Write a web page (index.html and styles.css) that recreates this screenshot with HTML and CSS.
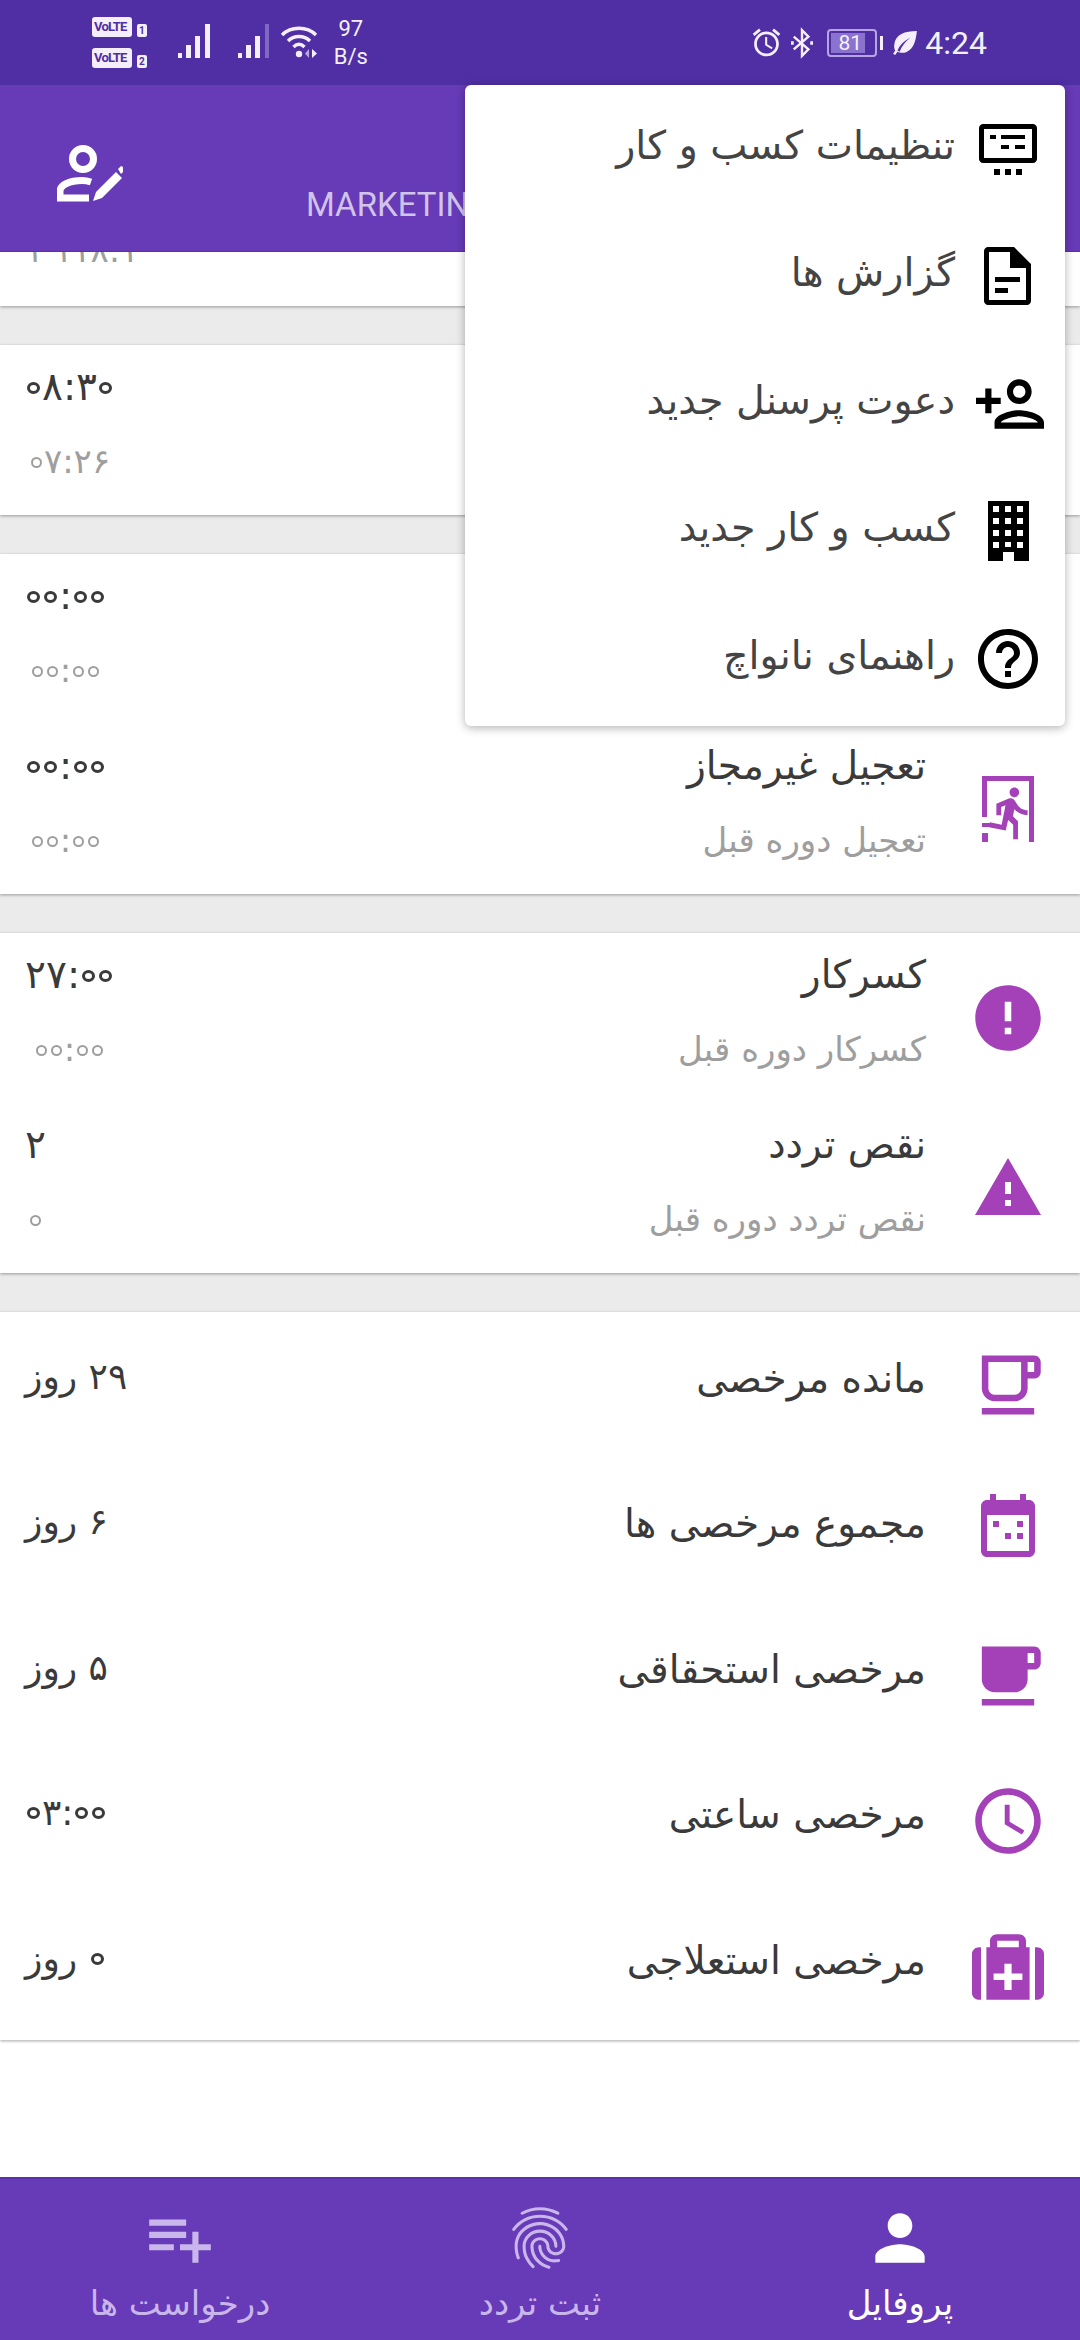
FILE: index.html
```html
<!DOCTYPE html>
<html lang="fa">

<head>
    <meta charset="UTF-8">
    <title>پروفایل</title>
    <link rel="stylesheet" href="styles.css">
</head>

<body>
    <div class="phone">

        <div class="status-bar">
            <div class="status-left">
                <div class="volte-stack">
                    <div class="volte"><span class="volte-tag">VoLTE</span><span class="sim-no">1</span></div>
                    <div class="volte"><span class="volte-tag">VoLTE</span><span class="sim-no">2</span></div>
                </div>
                <svg class="signal" viewBox="0 0 36 36"><path fill="#f5effc" d="M0 31h4v5H0zM8 23h5v13H8zM17 14h5v22h-5zM27 2h5v34h-5z"/></svg>
                <svg class="signal second" viewBox="0 0 36 36"><path fill="#f5effc" d="M0 31h4v5H0zM8 23h5v13H8zM17 14h5v22h-5z"/><path fill="#8068c4" d="M27 2h4v34h-4z"/></svg>
                <svg class="wifi" viewBox="0 0 40 36"><g fill="none" stroke="#f5effc" stroke-width="3.4"><path d="M2 12C11 3 27 3 36 12"/><path d="M8 18c6-6 16-6 22 0"/><path d="M13.500 24c3.500-3.500 7.500-3.500 11 0"/></g><circle cx="19" cy="31" r="3.200" fill="#f5effc"/><path fill="#b9a7e2" d="M29 26v9l-4-4.500z"/><path fill="#f5effc" d="M32 26v9l5-4.500z"/></svg>
                <div class="net-speed">97<br>B/s</div>
            </div>
            <div class="status-right">
                <svg class="alarm" viewBox="0 0 24 24"><path fill="#f5effc" d="M22 5.720l-4.600-3.860-1.290 1.530 4.600 3.860L22 5.720zM7.880 3.390L6.600 1.860 2 5.710l1.290 1.530 4.590-3.850zM12.500 8H11v6l4.750 2.850.75-1.230-4-2.370V8zM12 4c-4.970 0-9 4.030-9 9s4.030 9 9 9 9-4.030 9-9-4.030-9-9-9zm0 16c-3.870 0-7-3.130-7-7s3.130-7 7-7 7 3.130 7 7-3.130 7-7 7z"/></svg>
                <svg class="bluetooth" viewBox="0 0 24 34"><path fill="none" stroke="#f5effc" stroke-width="2.600" d="M3 10l16 14-7 7V3l7 7L3 24"/><path fill="#f5effc" d="M0 15h3v4H0zM21 15h3v4h-3z"/></svg>
                <div class="battery">
                    <div class="battery-body"><span class="battery-level"></span><span class="battery-pct">81</span></div>
                    <span class="battery-cap"></span>
                </div>
                <svg class="leaf" viewBox="0 0 24 24"><path fill="#f5effc" d="M23 1C12 1 3 4 2 14c-.2 2 .3 4 1 5l-2 3 2 1 2-3c2 1 5 1.500 8 .5C20 18 22 10 23 1zM5 19c2-5 6-9 12-12-5 4-8 8-10 13z"/></svg>
                <span class="clock">4:24</span>
            </div>
        </div>

        <div class="app-bar">
            <svg class="edit-user" viewBox="0 0 66 58"><circle cx="26" cy="14" r="10.500" fill="none" stroke="#fff" stroke-width="7"/><path fill="none" stroke="#fff" stroke-width="7" d="M34 37c-3-1-6-1.500-9-1.500C13 35.500 3 40 3 46v7h29"/><path fill="#fff" d="M59 27l6 6-20 20-9 3 3-9zM61 24l3-3 2 1v5l-2 2z"/></svg>
            <span class="company">MARKETING</span>
        </div>

        <div class="report" dir="rtl">
            <div class="card clipped">
                <div class="row">
                    <div class="row-vals">
                        <span class="val"></span>
                        <span class="sub">۱۱۸:۱ ۱</span>
                    </div>
                </div>
            </div>
            <div class="spacer"></div>

            <div class="card">
                <div class="row">
                    <div class="row-text"></div>
                    <div class="row-vals">
                        <span class="val" dir="ltr"><i class="zero">۰</i>۸:۳<i class="zero">۰</i></span>
                        <span class="sub" dir="ltr"><i class="zero">۰</i>۷:۲۶</span>
                    </div>
                </div>
            </div>
            <div class="spacer"></div>

            <div class="card">
                <div class="row">
                    <div class="row-text"></div>
                    <div class="row-vals">
                        <span class="val" dir="ltr"><i class="zero">۰</i><i class="zero">۰</i>:<i class="zero">۰</i><i class="zero">۰</i></span>
                        <span class="sub" dir="ltr"><i class="zero">۰</i><i class="zero">۰</i>:<i class="zero">۰</i><i class="zero">۰</i></span>
                    </div>
                </div>
                <div class="row">
                    <svg class="row-icon" viewBox="-10 -3 72 72"><g fill="#a541b8"><path d="M0 0h52v66h-5V5H5v36H0zM0 47h9v4H0zM0 57h6v9H0z"/><path transform="translate(0 8) scale(2.4)" d="M13.490 5.480c1.100 0 2-.900 2-2s-.900-2-2-2-2 .900-2 2 .900 2 2 2zm-3.600 13.900l1-4.400 2.100 2v6h2v-7.500l-2.100-2 .600-3c1.300 1.500 3.300 2.500 5.500 2.500v-2c-1.900 0-3.500-1-4.300-2.400l-1-1.600c-.400-.600-1-1-1.700-1-.300 0-.500.100-.800.100l-5.200 2.200v4.700h2v-3.400l1.800-.700-1.600 8.100-4.900-1-.400 2 7 1.400z"/></g></svg>
                    <div class="row-text">
                        <span class="title">تعجیل غیرمجاز</span>
                        <span class="sub">تعجیل دوره قبل</span>
                    </div>
                    <div class="row-vals">
                        <span class="val" dir="ltr"><i class="zero">۰</i><i class="zero">۰</i>:<i class="zero">۰</i><i class="zero">۰</i></span>
                        <span class="sub" dir="ltr"><i class="zero">۰</i><i class="zero">۰</i>:<i class="zero">۰</i><i class="zero">۰</i></span>
                    </div>
                </div>
            </div>
            <div class="spacer"></div>

            <div class="card">
                <div class="row">
                    <svg class="row-icon" viewBox="1 1 22 22"><path fill="#a541b8" d="M12 2C6.480 2 2 6.480 2 12s4.480 10 10 10 10-4.480 10-10S17.520 2 12 2zm1 15h-2v-2h2v2zm0-4h-2V7h2v6z"/></svg>
                    <div class="row-text">
                        <span class="title">کسرکار</span>
                        <span class="sub">کسرکار دوره قبل</span>
                    </div>
                    <div class="row-vals">
                        <span class="val" dir="ltr">۲۷:<i class="zero">۰</i><i class="zero">۰</i></span>
                        <span class="sub" dir="ltr"><i class="zero">۰</i><i class="zero">۰</i>:<i class="zero">۰</i><i class="zero">۰</i></span>
                    </div>
                </div>
                <div class="row">
                    <svg class="row-icon" viewBox="0 0 24 24"><path fill="#a541b8" d="M1 21h22L12 2 1 21zm12-3h-2v-2h2v2zm0-4h-2v-4h2v4z"/></svg>
                    <div class="row-text">
                        <span class="title">نقص تردد</span>
                        <span class="sub">نقص تردد دوره قبل</span>
                    </div>
                    <div class="row-vals">
                        <span class="val">۲</span>
                        <span class="sub"><i class="zero">۰</i></span>
                    </div>
                </div>
            </div>
            <div class="spacer"></div>

            <div class="card leave">
                <div class="row">
                    <svg class="row-icon" viewBox="1 1 22 22"><path fill="#a541b8" d="M4 19h16v2H4zM20 3H4v10c0 2.210 1.790 4 4 4h6c2.210 0 4-1.790 4-4v-3h2c1.110 0 2-.890 2-2V5c0-1.110-.890-2-2-2zm-4 10c0 1.100-.900 2-2 2H8c-1.100 0-2-.900-2-2V5h10v8zm4-5h-2V5h2v3z"/></svg>
                    <div class="row-text"><span class="title">مانده مرخصی</span></div>
                    <div class="row-vals"><span class="val">۲۹ روز</span></div>
                </div>
                <div class="row">
                    <svg class="row-icon" viewBox="0 2 24 24"><path fill="#a541b8" d="M5 4h1V2h2v2h8V2h2v2h1c1.100 0 2 .900 2 2v15c0 1.100-.900 2-2 2H5c-1.100 0-2-.900-2-2V6c0-1.100.900-2 2-2zm0 5v12h14V9H5z"/><path fill="#a541b8" d="M7 11h2v2H7zM15 11h2v2h-2zM11 15h2v2h-2zM15 15h2v2h-2z"/></svg>
                    <div class="row-text"><span class="title">مجموع مرخصی ها</span></div>
                    <div class="row-vals"><span class="val">۶ روز</span></div>
                </div>
                <div class="row">
                    <svg class="row-icon" viewBox="1 1 22 22"><path fill="#a541b8" d="M20 3H4v10c0 2.210 1.790 4 4 4h6c2.210 0 4-1.790 4-4v-3h2c1.110 0 2-.890 2-2V5c0-1.110-.890-2-2-2zm0 5h-2V5h2v3zM4 19h16v2H4z"/></svg>
                    <div class="row-text"><span class="title">مرخصی استحقاقی</span></div>
                    <div class="row-vals"><span class="val">۵ روز</span></div>
                </div>
                <div class="row">
                    <svg class="row-icon" viewBox="1 1 22 22"><path fill="#a541b8" d="M11.990 2C6.470 2 2 6.480 2 12s4.470 10 9.990 10C17.520 22 22 17.520 22 12S17.520 2 11.990 2zM12 20c-4.420 0-8-3.580-8-8s3.580-8 8-8 8 3.580 8 8-3.580 8-8 8z"/><path fill="#a541b8" d="M12.500 7H11v6l5.250 3.150.750-1.230-4.500-2.670z"/></svg>
                    <div class="row-text"><span class="title">مرخصی ساعتی</span></div>
                    <div class="row-vals" dir="ltr"><span class="val"><i class="zero">۰</i>۳:<i class="zero">۰</i><i class="zero">۰</i></span></div>
                </div>
                <div class="row">
                    <svg class="row-icon" viewBox="2 1 20 22" preserveAspectRatio="none"><path fill="#a541b8" d="M9 2h6c1.100 0 2 .900 2 2v2h1v16H6V6h1V4c0-1.100.900-2 2-2zm0 2v2h6V4H9zm2 7v3H8v2h3v3h2v-3h3v-2h-3v-3h-2z"/><path fill="#a541b8" d="M4.500 6v16H4c-1.100 0-2-.900-2-2V8c0-1.100.900-2 2-2zM19.500 6v16h.500c1.100 0 2-.900 2-2V8c0-1.100-.900-2-2-2z"/></svg>
                    <div class="row-text"><span class="title">مرخصی استعلاجی</span></div>
                    <div class="row-vals"><span class="val"><i class="zero">۰</i> روز</span></div>
                </div>
            </div>
        </div>

        <nav class="bottom-nav" dir="rtl">
            <div class="nav-item active">
                <svg class="nav-icon" viewBox="0 0 24 24"><path fill="#fff" d="M12 12c2.210 0 4-1.790 4-4s-1.790-4-4-4-4 1.790-4 4 1.790 4 4 4zm0 2c-2.670 0-8 1.340-8 4v2h16v-2c0-2.660-5.330-4-8-4z"/></svg>
                <span>پروفایل</span>
            </div>
            <div class="nav-item">
                <svg class="nav-icon" viewBox="0 0 24 24"><path fill="#c9b6ea" d="M17.810 4.470c-.080 0-.160-.020-.230-.060C15.660 3.420 14 3 12.010 3c-1.980 0-3.860.470-5.570 1.410-.240.130-.540.040-.680-.200-.130-.240-.040-.550.200-.680C7.820 2.520 9.860 2 12.010 2c2.130 0 3.990.470 6.030 1.520.250.130.340.430.210.670-.090.180-.260.280-.440.280zM3.500 9.720c-.100 0-.200-.030-.290-.090-.230-.160-.280-.470-.120-.700.990-1.400 2.250-2.500 3.750-3.270C9.980 4.040 14 4.030 17.150 5.650c1.500.770 2.760 1.860 3.750 3.250.160.220.110.540-.12.700-.23.160-.54.110-.700-.12-.900-1.260-2.040-2.250-3.390-2.940-2.870-1.470-6.540-1.470-9.400.010-1.360.700-2.500 1.700-3.400 2.960-.080.140-.230.210-.39.210zm6.250 12.070c-.130 0-.260-.050-.350-.150-.870-.870-1.340-1.430-2.010-2.640-.690-1.230-1.050-2.730-1.050-4.340 0-2.970 2.540-5.390 5.660-5.390s5.660 2.420 5.660 5.390c0 .280-.220.500-.500.500s-.500-.220-.500-.500c0-2.420-2.090-4.390-4.660-4.390s-4.660 1.970-4.660 4.390c0 1.440.320 2.770.930 3.850.640 1.150 1.080 1.640 1.850 2.420.190.200.190.510 0 .710-.110.100-.240.150-.370.150zm7.170-1.850c-1.190 0-2.240-.300-3.100-.890-1.490-1.010-2.380-2.650-2.380-4.390 0-.280.220-.500.500-.500s.500.220.500.500c0 1.410.720 2.740 1.940 3.560.710.480 1.540.710 2.540.710.240 0 .640-.030 1.040-.100.270-.050.530.130.580.410.050.270-.130.530-.41.580-.570.110-1.070.120-1.210.120zM14.910 22c-.040 0-.090-.010-.130-.020-1.590-.440-2.630-1.030-3.720-2.100-1.400-1.390-2.170-3.240-2.170-5.220 0-1.620 1.380-2.940 3.080-2.940s3.080 1.320 3.080 2.940c0 1.070.930 1.940 2.080 1.940s2.080-.870 2.080-1.940c0-3.770-3.250-6.830-7.250-6.830-2.840 0-5.440 1.580-6.610 4.030-.390.810-.590 1.760-.590 2.800 0 .780.070 2.010.670 3.610.100.260-.030.550-.29.640-.260.100-.550-.040-.640-.29-.490-1.310-.730-2.610-.730-3.960 0-1.200.230-2.290.680-3.240 1.330-2.790 4.280-4.600 7.510-4.600 4.550 0 8.250 3.510 8.250 7.830 0 1.620-1.380 2.940-3.080 2.940s-3.080-1.320-3.080-2.940c0-1.070-.930-1.940-2.080-1.940s-2.080.870-2.080 1.940c0 1.710.660 3.310 1.870 4.510.950.940 1.860 1.460 3.270 1.850.270.070.42.350.35.610-.050.230-.260.380-.470.380z"/></svg>
                <span>ثبت تردد</span>
            </div>
            <div class="nav-item">
                <svg class="nav-icon" viewBox="0 0 24 24"><path fill="#c9b6ea" d="M14 10H2v2h12v-2zm0-4H2v2h12V6zm4 8v-4h-2v4h-4v2h4v4h2v-4h4v-2h-4zM2 16h8v-2H2v2z"/></svg>
                <span>درخواست ها</span>
            </div>
        </nav>

        <!-- overflow menu, sits over the app bar and list -->
        <div class="menu" dir="rtl">
            <div class="menu-item">
                <svg class="menu-icon" viewBox="0 0 60 60"><path fill="#000" d="M5 5h50c2 0 4 2 4 4v31c0 2-2 4-4 4H5c-2 0-4-2-4-4V9c0-2 2-4 4-4zm1 5v29h48V10zM12 16h6v4h-6zM23 16h24v4H23zM23 26h8v4h-8zM37 26h10v4H37zM16 50h6v6h-6zM27 50h6v6h-6zM38 50h6v6h-6z"/></svg>
                <span>تنظیمات کسب و کار</span>
            </div>
            <div class="menu-item">
                <svg class="menu-icon" viewBox="0 0 60 60"><path fill="#000" d="M10 1h26l17 17v37c0 2-2 4-4 4H10c-2 0-4-2-4-4V5c0-2 2-4 4-4zm1 5v48h37V22H32V6zM17 31h25v5H17zM17 42h13v5H17z"/></svg>
                <span>گزارش ها</span>
            </div>
            <div class="menu-item">
                <svg class="menu-icon wide" viewBox="1 3 22 18"><path fill="#000" d="M15 6c1.100 0 2 .900 2 2s-.900 2-2 2-2-.900-2-2 .900-2 2-2m0 10c2.700 0 5.800 1.290 6 2H9c.230-.720 3.310-2 6-2m0-12c-2.210 0-4 1.790-4 4s1.790 4 4 4 4-1.790 4-4-1.790-4-4-4zm0 10c-2.670 0-8 1.340-8 4v2h16v-2c0-2.660-5.330-4-8-4zm-9-4V7H4v3H1v2h3v3h2v-3h3v-2H6z"/></svg>
                <span>دعوت پرسنل جدید</span>
            </div>
            <div class="menu-item">
                <svg class="menu-icon" viewBox="0 0 60 60"><path fill="#000" fill-rule="evenodd" d="M10 0h41v60H36v-9H25v9H10zM15 5v6h6V5zM27 5v6h6V5zM39 5v6h6V5zM15 17v6h6v-6zM27 17v6h6v-6zM39 17v6h6v-6zM15 29v6h6v-6zM27 29v6h6v-6zM39 29v6h6v-6zM15 41v6h6v-6zM39 41v6h6v-6zM27 41v5h6v-5z"/></svg>
                <span>کسب و کار جدید</span>
            </div>
            <div class="menu-item">
                <svg class="menu-icon" viewBox="2 2 20 20"><path fill="#000" d="M11 18h2v-2h-2v2zm1-16C6.480 2 2 6.480 2 12s4.480 10 10 10 10-4.480 10-10S17.520 2 12 2zm0 18c-4.410 0-8-3.590-8-8s3.590-8 8-8 8 3.590 8 8-3.590 8-8 8zm0-14c-2.210 0-4 1.790-4 4h2c0-1.100.900-2 2-2s2 .900 2 2c0 2-3 1.750-3 5h2c0-2.250 3-2.500 3-5 0-2.210-1.790-4-4-4z"/></svg>
                <span>راهنمای نانواچ</span>
            </div>
        </div>

    </div>
</body>

</html>
```

FILE: styles.css
```css
body {
    margin: 0;
    font-family: "DejaVu Sans", sans-serif;
    background: white;
    color: #333;
}

.phone {
    position: relative;
    width: 1080px;
    height: 2340px;
    display: flex;
    flex-direction: column;
    overflow: hidden;
}

/* status bar */
.status-bar {
    height: 85px;
    flex-shrink: 0;
    background: #4f2fa3;
    color: #f5effc;
    font-family: Roboto, sans-serif;
    display: flex;
    justify-content: space-between;
    align-items: center;
    padding: 0 93px 0 92px;
}

.status-left,
.status-right {
    display: flex;
    align-items: center;
}

.volte-stack {
    display: flex;
    flex-direction: column;
    gap: 11px;
    margin-right: 31px;
}

.volte {
    display: flex;
    align-items: flex-end;
    gap: 5px;
}

.volte-tag {
    background: #f5effc;
    color: #4f2fa3;
    font-size: 13px;
    font-weight: 700;
    line-height: 20px;
    padding: 0 2px;
    border-radius: 3px;
    width: 36px;
    white-space: nowrap;
    letter-spacing: -0.8px;
}

.sim-no {
    background: #f5effc;
    color: #4f2fa3;
    font-size: 10px;
    font-weight: 700;
    line-height: 13px;
    padding: 0 2px;
    border-radius: 2px;
}

.signal {
    width: 36px;
    height: 36px;
    margin: 0 24px 5px 0;
}

.signal.second {
    margin-right: 6px;
}

.wifi {
    width: 40px;
    height: 36px;
    margin-bottom: 4px;
}

.net-speed {
    margin-left: 14px;
    font-size: 22px;
    line-height: 28px;
    text-align: center;
}

.alarm {
    width: 33px;
    height: 33px;
    margin-right: 8px;
}

.bluetooth {
    width: 22px;
    height: 32px;
    margin-right: 14px;
}

.battery {
    display: flex;
    align-items: center;
    margin-right: 9px;
}

.battery-body {
    position: relative;
    width: 46px;
    height: 24px;
    border: 2px solid #b7a5e3;
    border-radius: 4px;
}

.battery-level {
    position: absolute;
    top: 2px;
    left: 2px;
    bottom: 2px;
    width: 34px;
    background: #8a72cf;
}

.battery-pct {
    position: absolute;
    top: 0;
    left: 0;
    right: 4px;
    text-align: center;
    font-size: 21px;
    line-height: 24px;
}

.battery-cap {
    width: 3px;
    height: 14px;
    margin-left: 3px;
    background: #f5effc;
}

.leaf {
    width: 26px;
    height: 26px;
    margin-right: 7px;
}

.clock {
    font-size: 32px;
}

/* app bar */
.app-bar {
    height: 167px;
    flex-shrink: 0;
    background: #673ab7;
    border-bottom: 1px solid #5a30a8;
    box-sizing: border-box;
    display: flex;
    align-items: flex-start;
    padding: 60px 0 0 57px;
}

.edit-user {
    width: 66px;
    height: 58px;
}

.company {
    margin: 40px 0 0 183px;
    font-family: Roboto, sans-serif;
    font-size: 33px;
    color: #d1c4e9;
    white-space: nowrap;
}

/* report list */
.report {
    flex: 1;
    min-height: 0;
    overflow: hidden;
}

.card {
    background: white;
    box-shadow: 0 1px 3px rgba(0, 0, 0, 0.35);
    position: relative;
}

.clipped {
    margin-top: -116px;
}

.clipped .row-vals {
    margin-top: -14px;
}

.spacer {
    height: 39px;
    background: #ebebeb;
}

.row {
    height: 170px;
    display: flex;
    align-items: center;
    padding: 0 36px 0 25px;
}

.row-icon {
    width: 72px;
    height: 72px;
    margin-left: 46px;
    flex-shrink: 0;
}

.row-text,
.row-vals {
    display: flex;
    flex-direction: column;
    margin-top: -10px;
}

.row-text {
    flex: 1;
    align-items: flex-start;
}

.row-vals {
    margin-right: auto;
    align-items: center;
}

.title,
.val {
    font-size: 39px;
    line-height: 72px;
    color: #3a3a3a;
    white-space: nowrap;
}

.val {
    min-height: 72px;
}

.sub {
    font-size: 34px;
    line-height: 76px;
    color: #9e9e9e;
    white-space: nowrap;
}

/* the persian zero is a ring in the app font, dejavu only has a dot */
.zero {
    display: inline-block;
    box-sizing: border-box;
    width: 13px;
    height: 12px;
    margin: 0 2px;
    border: 3px solid #3a3a3a;
    border-radius: 50%;
    color: transparent;
    font-size: 7px;
    font-style: normal;
    line-height: 6px;
    text-align: center;
    vertical-align: 10px;
}

.sub .zero {
    width: 11px;
    height: 11px;
    border-width: 2px;
    border-color: #9e9e9e;
    vertical-align: 9px;
}

.leave .row {
    height: 145.5px;
}

.leave .row-text {
    margin-top: -12px;
}

.leave .row-vals {
    margin-top: -16px;
}

.leave .val {
    font-size: 36px;
}

/* bottom nav */
.bottom-nav {
    height: 163px;
    flex-shrink: 0;
    background: #673ab7;
    border-top: 2px solid #5a30a8;
    box-sizing: border-box;
    display: grid;
    grid-template-columns: repeat(3, 1fr);
}

.nav-item {
    display: flex;
    flex-direction: column;
    align-items: center;
    padding-top: 22px;
    font-size: 34px;
    line-height: 40px;
    color: #c9b6ea;
}

.nav-item.active {
    color: white;
}

.nav-icon {
    width: 74px;
    height: 74px;
    margin-bottom: 8px;
}

/* overflow menu */
.menu {
    position: absolute;
    top: 85px;
    left: 465px;
    width: 600px;
    height: 641px;
    background: white;
    border-radius: 6px;
    box-shadow: 0 2px 10px rgba(0, 0, 0, 0.3);
}

.menu-item {
    height: 127.5px;
    display: flex;
    align-items: center;
    padding-right: 27px;
    font-size: 39.5px;
    color: #444;
    white-space: nowrap;
}

.menu-item span {
    margin-bottom: 8px;
}

.menu-icon {
    width: 60px;
    height: 60px;
    margin-left: 23px;
    flex-shrink: 0;
}

.menu-icon.wide {
    width: 68px;
    margin-right: -6px;
    margin-left: 21px;
}
```
